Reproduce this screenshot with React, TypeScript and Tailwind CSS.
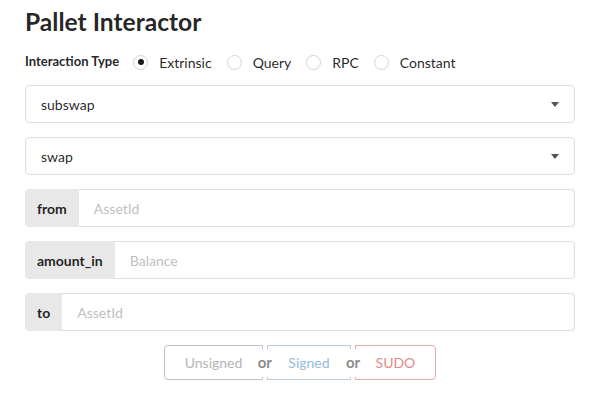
import { useState } from 'react';

const types = ['Extrinsic', 'Query', 'RPC', 'Constant'];

export default function App() {
  const [type, setType] = useState('Extrinsic');

  return (
    <div className="min-h-screen bg-white font-['Lato','Noto_Sans',sans-serif] text-[14px] text-[rgba(0,0,0,0.87)]">
      <div className="ml-[25px] mr-[23px] pt-[4px]">
        <h1 className="text-[24.6px] font-bold leading-[36px]">Pallet Interactor</h1>

        <div className="mt-[12px] flex h-[20px] items-center">
          <span className="mr-[14px] text-[13px] font-bold">Interaction Type</span>
          {types.map((t) => (
            <label key={t} className="mr-[15px] flex cursor-pointer items-center" onClick={() => setType(t)}>
              <span className="flex h-[15px] w-[15px] items-center justify-center rounded-full border border-[#d4d4d5] bg-white">
                {type === t && <span className="h-[6px] w-[6px] rounded-full bg-[#1b1c1d]" />}
              </span>
              <span className="ml-[11px]">{t}</span>
            </label>
          ))}
        </div>

        <div className="mt-[13px] flex flex-col gap-[14px]">
          <Dropdown value="subswap" />
          <Dropdown value="swap" />
          <LabeledInput label="from" placeholder="AssetId" />
          <LabeledInput label="amount_in" placeholder="Balance" />
          <LabeledInput label="to" placeholder="AssetId" />
        </div>

        <div className="mt-[14px] flex justify-center">
          <div className="flex h-[35px]">
            <button
              type="button"
              disabled
              className="rounded-l-[4px] border border-[#c2c2c2] px-[19.5px] text-[#b5b5b5]"
            >
              Unsigned
            </button>
            <Or />
            <button type="button" disabled className="border border-[#b4cfe3] px-[20.5px] text-[#94bcdc]">
              Signed
            </button>
            <Or />
            <button
              type="button"
              disabled
              className="rounded-r-[4px] border border-[#e6a9a9] px-[19.5px] text-[#e28a8a]"
            >
              SUDO
            </button>
          </div>
        </div>
      </div>
    </div>
  );
}

function Or() {
  return (
    <div className="relative z-10 w-[4px]">
      <span className="absolute left-1/2 top-1/2 -ml-[9px] -mt-[14px] flex h-[28px] w-[18px] items-center justify-center bg-white text-[15px] font-bold text-[#8c8c8c]">
        or
      </span>
    </div>
  );
}

function Dropdown({ value }: { value: string }) {
  return (
    <div className="flex h-[38px] items-center justify-between rounded-[4px] border border-[#dedede] bg-white pl-[15px] pr-[15px]">
      <span>{value}</span>
      <svg width="8" height="5" viewBox="0 0 8 5" className="text-[#555]">
        <path d="M0 0h8L4 5z" fill="currentColor" />
      </svg>
    </div>
  );
}

function LabeledInput({ label, placeholder }: { label: string; placeholder: string }) {
  return (
    <div className="flex h-[38px]">
      <div className="flex items-center rounded-l-[4px] bg-[#e8e8e8] px-[12px] font-bold">{label}</div>
      <input
        placeholder={placeholder}
        className="min-w-0 flex-1 rounded-r-[4px] border border-l-0 border-[#dedede] px-[15px] text-[14px] outline-none placeholder:text-[#bfbfbf]"
      />
    </div>
  );
}
